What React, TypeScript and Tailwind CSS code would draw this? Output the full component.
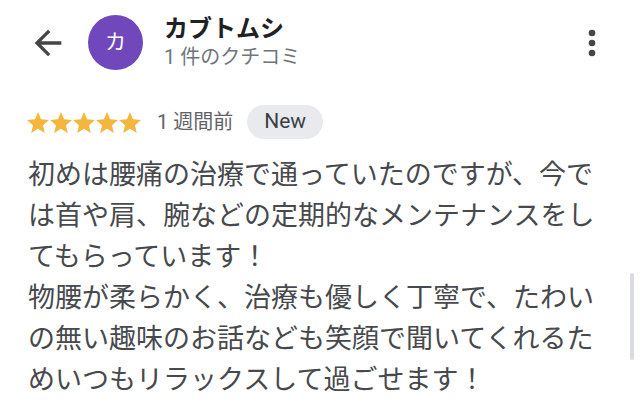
import React from "react";

const Star = () => (
  <svg width="22" height="21" viewBox="2 2 20 19" className="block">
    <path
      d="M12 17.27L18.18 21l-1.64-7.03L22 9.24l-7.19-.61L12 2 9.19 8.63 2 9.24l5.46 4.73L5.82 21z"
      fill="#f4b63d"
    />
  </svg>
);

export default function App() {
  const font = { fontFamily: 'Roboto, "Noto Sans CJK JP", sans-serif' };
  return (
    <div
      className="relative w-[640px] h-[418px] bg-white overflow-hidden"
      style={font}
    >
      <div className="flex items-center pl-[28px] pr-[28px] pt-[15px] h-[70px]">
        <svg width="40" height="40" viewBox="0 0 24 24" className="shrink-0">
          <path
            d="M20 11H7.83l5.59-5.59L12 4l-8 8 8 8 1.41-1.41L7.83 13H20v-2z"
            fill="#444746"
          />
        </svg>
        <div className="ml-[20px] w-[55px] h-[55px] rounded-full bg-[#7048bb] flex items-center justify-center shrink-0">
          <span className="text-white text-[21px] leading-none">カ</span>
        </div>
        <div className="ml-[21px] flex flex-col">
          <div className="text-[24px] leading-[28px] font-bold text-[#202124]">
            カブトムシ
          </div>
          <div className="text-[20px] leading-[28px] text-[#70757a]">
            1 件のクチコミ
          </div>
        </div>
        <svg width="40" height="40" viewBox="0 0 24 24" className="ml-auto shrink-0">
          <circle cx="12" cy="6" r="2" fill="#444746" />
          <circle cx="12" cy="12" r="2" fill="#444746" />
          <circle cx="12" cy="18" r="2" fill="#444746" />
        </svg>
      </div>

      <div className="flex items-center mt-[35px] pl-[27px] h-[34px]">
        <div className="flex items-center gap-[1px]">
          <Star />
          <Star />
          <Star />
          <Star />
          <Star />
        </div>
        <span className="ml-[16px] text-[20px] leading-none text-[#5f6368]">
          1 週間前
        </span>
        <span className="ml-[14px] h-[34px] px-[17px] rounded-full bg-[#e8eaed] flex items-center text-[21px] text-[#3c4043]">
          New
        </span>
      </div>

      <div className="mt-[16px] pl-[28px] w-[604px] text-[27px] leading-[41px] text-[#47494d]">
        初めは腰痛の治療で通っていたのですが、今では首や肩、腕などの定期的なメンテナンスをしてもらっています！
        <br />
        物腰が柔らかく、治療も優しく丁寧で、たわいの無い趣味のお話なども笑顔で聞いてくれるためいつもリラックスして過ごせます！
      </div>

      <div className="absolute left-[630px] top-[273px] w-[4px] h-[87px] rounded-full bg-[#dadce0]" />
    </div>
  );
}
